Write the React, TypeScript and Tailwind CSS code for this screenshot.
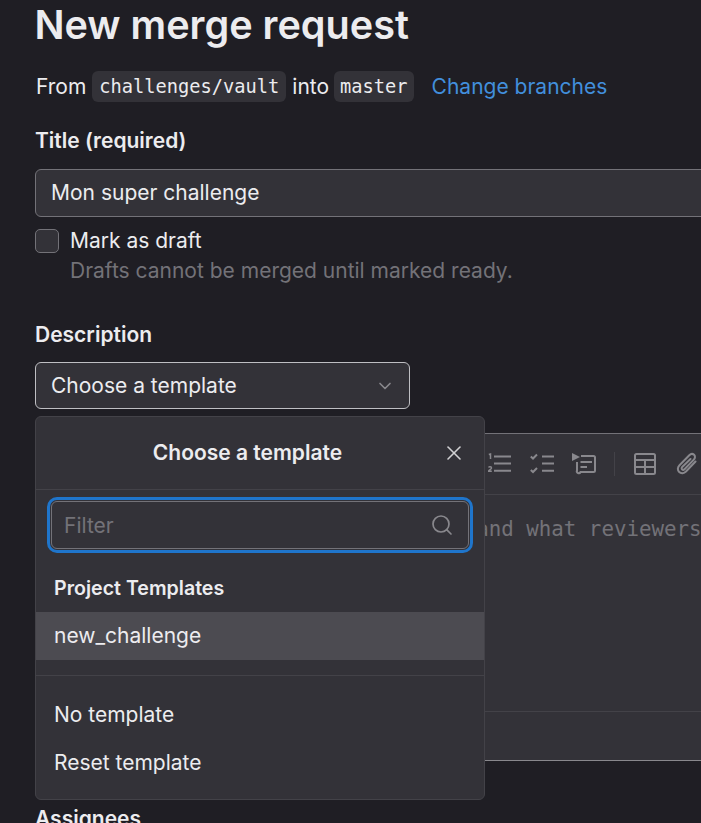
import React from "react";
import { ChevronDown, Search, X } from "lucide-react";

const MONO = "font-['DejaVu_Sans_Mono','Liberation_Mono',monospace]";

function NumberedListIcon() {
  return (
    <svg width="24" height="24" viewBox="0 0 24 24" fill="none" stroke="currentColor" strokeWidth="2">
      <path d="M6 4.500h17M6 11.500h17M6 18.800h17" />
      <path d="M.8 2.500 2.500 2v5" strokeWidth="1.500" />
      <path d="M.5 15.500c.6-1.100 3-1.100 3 .4 0 1.200-2.200 1.800-3 3.300h3.300" strokeWidth="1.500" />
    </svg>
  );
}

function TaskListIcon() {
  return (
    <svg width="24" height="24" viewBox="0 0 24 24" fill="none" stroke="currentColor" strokeWidth="2">
      <path d="M12 4.500h12M12 11.500h12M12 18.800h12" />
      <path d="m.8 4.500 2.200 2L7 2.500M.8 18l2.200 2 4-4" />
    </svg>
  );
}

function CollapsibleIcon() {
  return (
    <svg width="24" height="24" viewBox="0 0 24 24" fill="none" stroke="currentColor" strokeWidth="2">
      <path d="M0 1v8l8-4-8-4Z" fill="currentColor" stroke="none" />
      <path d="M9 4h12.500a1.500 1.500 0 0 1 1.500 1.500v13a1.500 1.500 0 0 1-1.500 1.500h-13A1.500 1.500 0 0 1 5 18.500V10" />
      <path d="M8.500 10H20M8.500 15H15" />
    </svg>
  );
}

function TableIcon() {
  return (
    <svg width="24" height="24" viewBox="0 0 24 24" fill="none" stroke="currentColor" strokeWidth="2">
      <rect x="2" y="2" width="20" height="20" rx="1.500" />
      <path d="M2 8h20M2 15h20M12 8v14" />
    </svg>
  );
}

function PaperclipIcon() {
  return (
    <svg width="24" height="24" viewBox="0 0 24 24" fill="none" stroke="currentColor" strokeWidth="2" strokeLinecap="round">
      <path d="M20.500 9.500 11 19.500c-2 2-5 2.200-6.800.5-1.900-1.800-1.700-4.800.3-6.800l9.800-10c1.400-1.400 3.500-1.600 4.800-.4 1.300 1.300 1.100 3.400-.3 4.800l-9.300 9.600c-.7.700-1.800.8-2.400.2-.7-.6-.6-1.700.1-2.400L15.500 7" />
    </svg>
  );
}

function TemplatePanel() {
  return (
    <div className="absolute left-0 top-[54px] z-10 h-[384px] w-[450px] rounded-[6px] border border-[#434248] bg-[#333238]">
      <div className="relative flex h-[73px] items-center justify-center border-b border-[#434248] pb-[1px] pr-[25px] text-[21px] font-semibold text-[#ececef]">
        <span>Choose a template</span>
        <X className="absolute right-[18px] top-[24px] text-[#d1d0d3]" size={24} strokeWidth={1.6} />
      </div>
      <div className="px-[15px] pt-[11px]">
        <div className="flex h-[48px] items-center justify-between rounded-[6px] border border-[#737278] pl-[12px] pr-[14px] text-[21px] text-[#737278] outline-[3px] outline-offset-[1px] outline-[#1f75cb]">
          <span className="pt-[1px]">Filter</span>
          <Search className="text-[#89888d]" size={24} strokeWidth={1.7} />
        </div>
      </div>
      <div className="px-[18px] pb-[10px] pt-[25px] text-[19.600px] font-semibold leading-[28px] text-[#ececef]">Project Templates</div>
      <div className="flex h-[48px] items-center bg-[#4c4b51] px-[18px] text-[21px] text-[#ececef]">new_challenge</div>
      <div className="mt-[15px] border-t border-[#434248] pt-[15px]">
        <div className="flex h-[48px] items-center px-[18px] text-[21px] text-[#ececef]">No template</div>
        <div className="flex h-[48px] items-center px-[18px] text-[21px] text-[#ececef]">Reset template</div>
      </div>
    </div>
  );
}

export default function App() {
  return (
    <div className="h-[823px] w-[701px] overflow-hidden bg-[#1f1e24] pl-[35px] font-['Inter',sans-serif] text-[#ececef]">
      <h1 className="-ml-[0.5px] mt-[1px] h-[48px] text-[39.600px] font-semibold leading-[48px] text-[#ececef]">New merge request</h1>

      <div className="mt-[22px] flex h-[31px] items-center whitespace-nowrap pl-[1px] text-[21px]">
        <span>From</span>
        <code className={`ml-[6px] flex h-[31px] items-center rounded-[6px] bg-[#333238] px-[7px] pt-[2px] text-[18.700px] ${MONO}`}>challenges/vault</code>
        <span className="ml-[6px]">into</span>
        <code className={`ml-[5px] flex h-[31px] items-center rounded-[6px] bg-[#333238] px-[6px] pt-[2px] text-[18.700px] ${MONO}`}>master</code>
        <a className="ml-[18px] text-[#428fdc]">Change branches</a>
      </div>

      <label className="mt-[25px] block h-[28px] text-[21px] font-semibold leading-[28px]">Title (required)</label>

      <div className="mt-[14px] flex h-[48px] w-[700px] items-center rounded-[6px] border border-[#737278] bg-[#333238] px-[15px] text-[21px]">Mon super challenge</div>

      <div className="mt-[12px] flex gap-[11px]">
        <div className="h-[24px] w-[24px] rounded-[5px] border border-[#737278] bg-[#333238]" />
        <div className="text-[21px] leading-[30px]">
          <div className="-mt-[3px]">Mark as draft</div>
          <div className="text-[#737278]">Drafts cannot be merged until marked ready.</div>
        </div>
      </div>

      <label className="mt-[35px] block h-[28px] text-[21px] font-semibold leading-[28px]">Description</label>

      <div className="relative mt-[13px]">
        <div className="flex h-[47px] w-[375px] items-center justify-between rounded-[6px] border border-[#bfbfc3] bg-[#333238] pl-[15px] pr-[14px] text-[21px]">
          <span>Choose a template</span>
          <ChevronDown className="text-[#89888d]" size={20} strokeWidth={2} />
        </div>
        <TemplatePanel />
      </div>

      <div className="mt-[24px] h-[328px] w-[700px] rounded-[6px] border border-[#737278] border-b-[#89888d] bg-[#333238]">
        <div className="flex h-[61px] items-center gap-[18px] border-b border-[#434248] pl-[452px] text-[#89888d]">
          <NumberedListIcon />
          <TaskListIcon />
          <CollapsibleIcon />
          <div className="h-[24px] w-px bg-[#434248]" />
          <TableIcon />
          <PaperclipIcon />
        </div>
        <div className={`h-[216px] whitespace-nowrap pl-[27px] pt-[20px] text-[20.800px] leading-[28px] text-[#737278] ${MONO}`}>
          Describe the goal of the changes and what reviewers should be aware of.
        </div>
        <div className="h-[49px] border-t border-[#434248]" />
      </div>

      <label className="mt-[44px] block h-[28px] text-[21px] font-semibold leading-[28px]">Assignees</label>
    </div>
  );
}
